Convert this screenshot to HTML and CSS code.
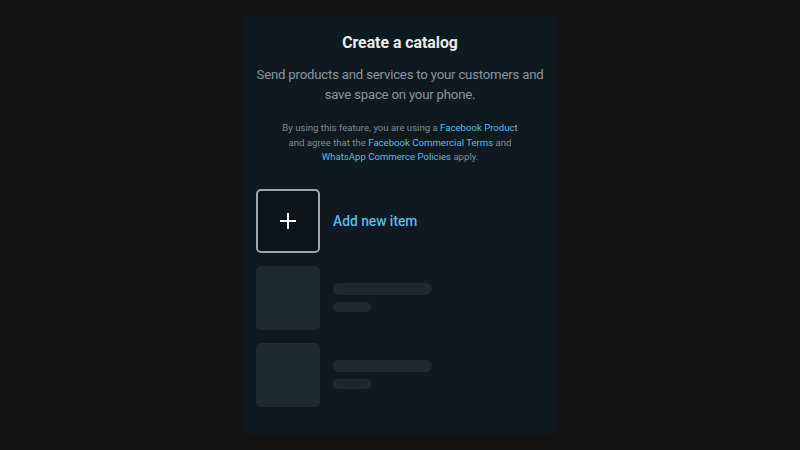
FILE: index.html
```html
<!DOCTYPE html>
<html>
<head>
<meta charset="utf-8">
<link rel="stylesheet" href="styles.css">
</head>
<body>
<div class="panel">
  <h1 class="title">Create a catalog</h1>
  <p class="subtitle">Send products and services to your customers and<br>save space on your phone.</p>
  <p class="terms">By using this feature, you are using a <a>Facebook Product</a><br>and agree that the <a>Facebook Commercial Terms</a> and<br><a>WhatsApp Commerce Policies</a> apply.</p>
  <div class="list">
    <div class="row">
      <div class="add-box">
        <svg width="18" height="18" viewBox="0 0 18 18"><path d="M9 1v16M1 9h16" stroke="#ffffff" stroke-width="2" fill="none"/></svg>
      </div>
      <span class="add-label">Add new item</span>
    </div>
    <div class="row">
      <div class="thumb"></div>
      <div class="bars"><div class="bar long"></div><div class="bar short"></div></div>
    </div>
    <div class="row">
      <div class="thumb"></div>
      <div class="bars"><div class="bar long"></div><div class="bar short"></div></div>
    </div>
  </div>
</div>
</body>
</html>
```
FILE: styles.css
```css
html, body {
  margin: 0;
  padding: 0;
  background: #141414;
  height: 100%;
}
body {
  font-family: Roboto, "Liberation Sans", sans-serif;
  padding-top: 15px;
  box-sizing: border-box;
}
.panel {
  width: 314px;
  height: 419px;
  margin: 0 auto;
  background: #0f1a20;
  box-sizing: border-box;
  padding: 18px 8px 0;
  text-align: center;
}
.title {
  margin: 0;
  font-size: 15.8px;
  line-height: 20px;
  font-weight: 700;
  color: #e9edef;
}
.subtitle {
  margin: 12px 0 0;
  font-size: 13.2px;
  letter-spacing: -0.2px;
  line-height: 20px;
  color: #8696a0;
  white-space: nowrap;
}
.terms {
  margin: 16px 0 0;
  font-size: 9.6px;
  line-height: 14.5px;
  color: #7d8c94;
}
.terms a {
  color: #5abbe6;
}
.list {
  margin-top: 24px;
  padding-left: 5px;
  display: flex;
  flex-direction: column;
  gap: 13px;
  text-align: left;
}
.row {
  display: flex;
  align-items: center;
  gap: 13px;
  height: 64px;
}
.add-box {
  width: 64px;
  height: 64px;
  box-sizing: border-box;
  border: 2px solid #9aa7ae;
  border-radius: 5px;
  background: #0b1418;
  display: flex;
  align-items: center;
  justify-content: center;
}
.add-label {
  font-size: 13.8px;
  font-weight: 500;
  color: #5abbe6;
}
.thumb {
  width: 64px;
  height: 64px;
  border-radius: 5px;
  background: #1c2b32;
}
.bars {
  display: flex;
  flex-direction: column;
  gap: 7px;
}
.bar {
  background: #1c2b32;
  border-radius: 6px;
}
.bar.long {
  width: 99px;
  height: 12px;
}
.bar.short {
  width: 38px;
  height: 10px;
  border-radius: 5px;
}
```
